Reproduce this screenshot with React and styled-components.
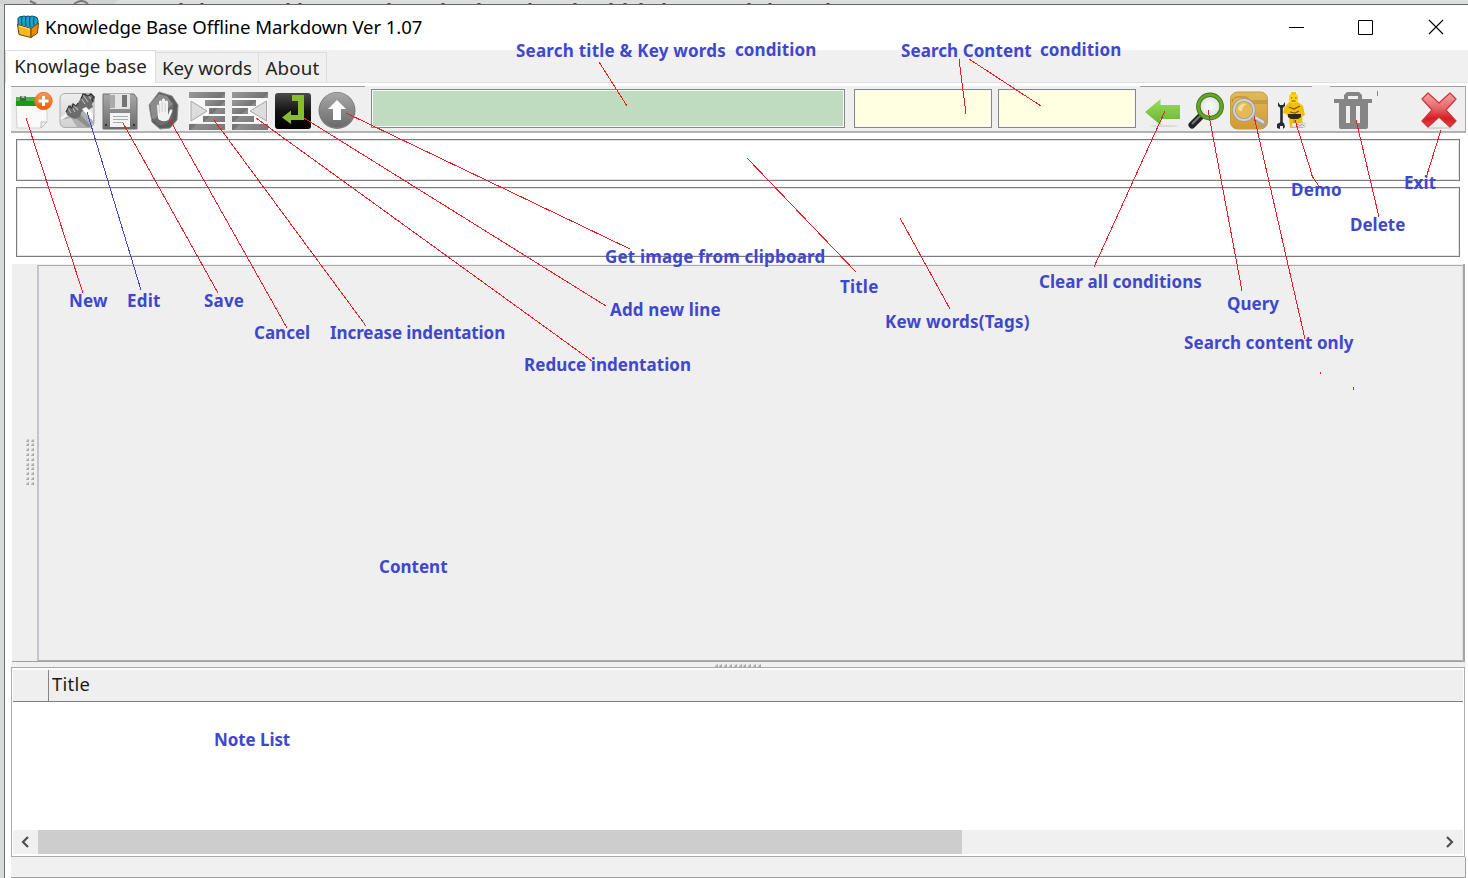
import React from "react";
import styled, { createGlobalStyle } from "styled-components";

const Global = createGlobalStyle`
  * { box-sizing: border-box; }
  html, body { margin: 0; padding: 0; overflow: hidden; }
  body { font-family: "Noto Sans", "Open Sans", "Liberation Sans", sans-serif; color: #1c1c1c; }
  svg { display: block; }
`;

const Desktop = styled.div`
  position: relative;
  width: 1468px;
  height: 878px;
  overflow: hidden;
  display: flex;
  flex-direction: column;
  background: #d9dada;
`;
const Backdrop = styled.div`
  flex: none;
  height: 4px;
  background: #d2d4d4;
`;
const WindowFrame = styled.main`
  flex: 1;
  min-height: 0;
  margin-left: 4px;
  border-left: 1px solid #707070;
  border-top: 1px solid #666;
  background: #fff;
  display: flex;
  flex-direction: column;
`;
const TitleBar = styled.header`
  flex: none;
  height: 45px;
  display: flex;
  align-items: center;
  padding: 0 1px 2px 11px;
`;
const Caption = styled.h1`
  flex: 1;
  margin: 0 0 0 5px;
  font-size: 18.6px;
  font-weight: 400;
  line-height: 26px;
  letter-spacing: ${(p) => p.$track}px;
  color: #000;
  white-space: nowrap;
`;
const WindowButton = styled.button`
  width: 70px;
  height: 40px;
  padding: 0;
  border: 0;
  background: none;
  display: grid;
  place-items: center;
  &:last-child { margin-right: -4px; }
`;
const Tabs = styled.nav`
  flex: none;
  height: 33px;
  display: flex;
  align-items: flex-end;
  background: #f0f0f0;
  border-bottom: 1px solid #e0e0e0;
`;
const Tab = styled.button`
  width: ${(p) => p.$width}px;
  height: ${(p) => (p.$active ? 33 : 30)}px;
  margin: 0 0 ${(p) => (p.$active ? -1 : 0)}px;
  padding: 0 0 ${(p) => (p.$active ? 2 : 0)}px;
  border: 1px solid #dcdcdc;
  border-left-width: ${(p) => (p.$active ? 1 : 0)}px;
  border-bottom: 0;
  background: ${(p) => (p.$active ? "#fff" : "#f0f0f0")};
  font: 400 18.7px/26px "Noto Sans", sans-serif;
  letter-spacing: ${(p) => p.$track}px;
  color: #242424;
  white-space: nowrap;
`;
const Page = styled.section`
  flex: 1;
  min-height: 0;
  padding: 3px 2px 0 6px;
  display: flex;
  flex-direction: column;
`;
const Toolbar = styled.div`
  flex: none;
  height: 47px;
  display: flex;
  align-items: center;
  background: #efefef;
  border-right: 1px solid #a9a9a9;
  border-bottom: 2px solid #b2b2b2;
`;
const ToolGroup = styled.div`
  width: ${(p) => p.$width}px;
  height: 45px;
  padding-left: 1px;
  display: flex;
  align-items: center;
  border-top: 1px solid ${(p) => (p.$plain ? "#efefef" : "#a0a0a0")};
`;
const Tool = styled.button`
  flex: none;
  width: ${(p) => p.$width || 43.3}px;
  height: 42px;
  padding: 1px 0 0;
  border: 0;
  background: none;
  display: grid;
  place-items: center;
`;
const SearchField = styled.input`
  flex: none;
  width: ${(p) => p.$width}px;
  height: 39px;
  margin: -2px 0 0 ${(p) => p.$gap}px;
  padding: 0 6px;
  border: 1px solid #878787;
  outline: 1px solid #f8f8f8;
  outline-offset: -2px;
  background: ${(p) => p.$tone};
`;
const Fields = styled.div`
  flex: none;
  padding: 6px 6px 0 5px;
  height: 131px;
  display: flex;
  flex-direction: column;
  gap: 6px;
`;
const TextField = styled.textarea`
  display: block;
  width: 100%;
  height: ${(p) => p.$height}px;
  margin: 0;
  resize: none;
  border: 1px solid #7c7c7c;
  outline: 1px solid #e4e4e4;
  outline-offset: -2px;
  background: #fff;
`;
const Editor = styled.div`
  flex: none;
  height: 398px;
  margin: 0 1px;
  display: flex;
  background: #efefef;
  border-right: 2px solid #a5a5aa;
  border-bottom: 1px solid #a0a0a0;
`;
const Gutter = styled.div`
  width: 25px;
  display: flex;
  align-items: center;
  justify-content: flex-end;
  padding-right: 1px;
`;
const Content = styled.div`
  flex: 1;
  margin-top: 1px;
  border: 1px solid #ababb2;
  border-left: 2px solid #c4c4cb;
  border-right-color: #dcdcdf;
`;
const Splitter = styled.div`
  flex: none;
  height: 5px;
  background: #f0f0f0;
  display: flex;
  justify-content: center;
  align-items: flex-end;
`;
const GripBox = styled.div`
  display: grid;
  grid-template-columns: repeat(${(p) => p.$cols}, ${(p) => p.$col}px);
  grid-auto-rows: ${(p) => p.$row}px;
`;
const GripDot = styled.i`
  width: 3px;
  height: 3px;
  background: linear-gradient(135deg, #e4e4e4 30%, #a8a8a8 60%);
`;
const NoteTable = styled.section`
  flex: none;
  height: 190px;
  margin-right: 1px;
  border: 1px solid #aaaab0;
  display: flex;
  flex-direction: column;
`;
const TableHead = styled.div`
  height: 34px;
  display: flex;
  margin: 0 1px;
  border-top: 2px solid #fafafa;
  border-bottom: 1px solid #7c7c7c;
  background: #efefef;
`;
const SelectorCell = styled.div`
  width: 36px;
  border-right: 1px solid #858585;
`;
const HeadCell = styled.div`
  padding-left: 3px;
  font-size: 18.4px;
  line-height: 28px;
  letter-spacing: 0.3px;
  color: #1a1a1a;
`;
const Rows = styled.div`
  flex: 1;
  background: #fff;
`;
const ScrollBar = styled.div`
  height: 26px;
  display: flex;
  background: #f0f0f0;
  border-bottom: 2px solid #fff;
  margin: 0 1px;
`;
const ScrollArrow = styled.button`
  width: 25px;
  padding: 0 2px 0 0;
  border: 0;
  background: none;
  display: grid;
  place-items: center;
`;
const Track = styled.div`
  flex: 1;
`;
const Thumb = styled.div`
  width: 924px;
  height: 24px;
  background: #cdcdcd;
`;
const StatusBar = styled.footer`
  flex: 1;
  background: #f0f0f0;
  border-right: 1px solid #a0a0a0;
  border-bottom: 1px solid #a0a0a0;
`;
const Overlay = styled.div`
  position: absolute;
  inset: 0;
  pointer-events: none;
`;
const Note = styled.span`
  position: absolute;
  left: ${(p) => p.$x}px;
  top: ${(p) => p.$y}px;
  font: 700 17px/24px "Noto Sans", sans-serif;
  letter-spacing: ${(p) => p.$track}px;
  color: #3f48cc;
  white-space: nowrap;
`;

const Icon = ({ children, size = 40 }) => (
  <svg width={size} height={size} viewBox="0 0 40 40">{children}</svg>
);

const Gradients = () => (
  <svg width="0" height="0" style={{ position: "absolute" }}>
    <defs>
      <linearGradient id="metal" x1="0" y1="0" x2="0" y2="1"><stop stopColor="#a8a8a8" /><stop offset="1" stopColor="#6a6a6a" /></linearGradient>
      <linearGradient id="bar" x1="0" y1="0" x2="1" y2="1"><stop stopColor="#999" /><stop offset=".5" stopColor="#747474" /><stop offset=".55" stopColor="#8c8c8c" /><stop offset="1" stopColor="#777" /></linearGradient>
      <linearGradient id="leaf" x1="0" y1="0" x2="0" y2="1"><stop stopColor="#9bdc60" /><stop offset="1" stopColor="#68b52d" /></linearGradient>
      <linearGradient id="ruby" x1="0" y1="0" x2="0" y2="1"><stop stopColor="#f3a5a5" /><stop offset=".45" stopColor="#e56566" /><stop offset=".75" stopColor="#d81e24" /><stop offset="1" stopColor="#e04448" /></linearGradient>
      <linearGradient id="gold" x1="0" y1="0" x2="0" y2="1"><stop stopColor="#dfbb59" /><stop offset="1" stopColor="#d09a36" /></linearGradient>
      <linearGradient id="night" x1="0" y1="0" x2="0" y2="1"><stop stopColor="#4a4a4a" /><stop offset=".5" stopColor="#141414" /><stop offset="1" stopColor="#000" /></linearGradient>
      <linearGradient id="orange" x1="0" y1="0" x2="0" y2="1"><stop stopColor="#fb9a4c" /><stop offset="1" stopColor="#ea5a0c" /></linearGradient>
      <linearGradient id="plate" x1="0" y1="0" x2="0" y2="1"><stop stopColor="#eee" /><stop offset="1" stopColor="#d2d2d2" /></linearGradient>
      <radialGradient id="glass"><stop stopColor="#fff" /><stop offset="1" stopColor="#dcdcdc" /></radialGradient>
    </defs>
  </svg>
);

const AppIcon = () => (
  <svg width="24" height="24" viewBox="0 0 24 24">
    <path d="M2 10V3.500q1-2.500 4-2 2-1 4 0 2-1 4 0 2-1 4 0 4 0 4 4v4l-7 5-13-3Z" fill="#12a5d6" stroke="#14475a" />
    <path d="M6 2q-1 3 0 8M10 2q-1 3 0 9M14 2q-1 3 0 10M18 2.500q-1 3 0 8" fill="none" stroke="#123c4c" />
    <path d="m1.500 9.500 13.500 4v9L3 19.500Z" fill="#fdb91b" stroke="#70440a" />
    <path d="m15 13.500 7.500-5.500-1 10-6.500 4.500Z" fill="#e98c0a" stroke="#70440a" />
    <path d="m3 11 11 3.300" stroke="#ffe06a" strokeWidth="1.200" />
  </svg>
);
const NewIcon = () => (
  <Icon>
    <path d="M2 12h31v20l-6 6H3Z" fill="#fafafa" stroke="#d2d2d2" />
    <path d="M2 7h31v9H2Z" fill="#189b1c" /><path d="M2 7h31v4H2Z" fill="#43b445" />
    <rect x="6" y="6" width="6" height="5" rx="1" fill="#3a6b3a" /><path d="M7.500 6h3v2h-3Z" fill="#bbb" />
    <path d="M27 38v-6h6Z" fill="#eee" stroke="#bdbdbd" />
    <circle cx="29.500" cy="11" r="8.700" fill="url(#orange)" stroke="#e8763a" />
    <path d="M29.500 6v10M24.500 11h10" stroke="#fff" strokeWidth="3" />
  </Icon>
);
const EditIcon = () => (
  <Icon>
    <rect x="3" y="3.500" width="34" height="34" rx="5" fill="url(#plate)" stroke="#acacac" />
    <path d="m4 30 6-3 7-2 10-9 10 9v8l-4 4H20l-6-9Z" fill="#b0b0b0" />
    <path d="m15 25 15 12h5L21 22Z" fill="#8f8f8f" />
    <path d="M4 29 33 6" stroke="#f6f6f6" strokeWidth="2.500" />
    <path d="M9 22 12 16l4-2 3 2 2-3 5-9 3-1 2 2 3-2 4 4-1 4-2 3 1 3-5 3-4-1-3 4-1 4-5 2-5-2-3-2Z" fill="#6c6c6c" />
    <path d="m11 18 3 5m0-8 4 7m-2-8 5 6M24 8l4 6m-2-9 5 7m-2-9 5 6" stroke="#b4b4b4" strokeWidth="1.200" />
    <path d="m9 22 3-6 3 2 1-4 3 2 2-3m3-4 2-5 3 1 2 1 3-2 3 3-2 2 1 3" fill="none" stroke="#333" strokeWidth="1.100" />
    <path d="m25 19 11 12v-7l-7-7Z" fill="#fff" />
  </Icon>
);
const SaveIcon = () => (
  <Icon>
    <path d="M4 4h30l3 4v31H3V4Z" fill="url(#metal)" stroke="#707070" />
    <path d="M10 4h20v15H10Z" fill="#e4e4e4" /><path d="M22 5h5v12h-5Z" fill="#747474" />
    <path d="M10 5h5v13h-5Z" fill="#aaa" /><path d="M10 23h20v14H10Z" fill="#f3f3f3" />
    <path d="M13 26.500h15M13 29.500h15M13 32.500h10" stroke="#aaa" />
    <path d="M5 34h2v2H5Zm28 0h2v2h-2Z" fill="#333" />
  </Icon>
);
const StopIcon = () => (
  <Icon>
    <path d="m15 2 13 4 6 9-1 15-7 8-10 1-8-7-3-17Z" fill="#5c5c5c" stroke="#8b8b8b" />
    <path d="m15 4 8 2 6 8-1 14-6 6-7 1-7-7-2-14Z" fill="#8c8c8c" />
    <path d="m9 30 20-16-1 14-6 6-7 1Z" fill="#6c6c6c" />
    <path d="M13 16c0-2 2-2 2 0v6V12c0-2 3-2 3 0v8V10c0-2 3-2 3 0v10-8c0-2 3-2 3 0v13l2-5c2-1 3 0 2 2l-3 7c-1 3-10 3-11-1Z" fill="#f2f2f2" />
    <path d="M15.200 14v9M18.200 12v10M21.200 13v9" stroke="#b5b5b5" strokeWidth=".6" />
  </Icon>
);
const IndentIcon = ({ reverse }) => (
  <Icon>
    <path d="M2 8h36v25H2Z" fill="#f8f8f8" />
    <path d="M2 2h36v6H2Zm0 32h36v6H2Z" fill="url(#bar)" />
    {reverse ? (
      <><path d="M2 10h24v6H2ZM2 18h16v6H2Zm0 8h22v6H2Z" fill="url(#bar)" /><path d="M36.500 11v20L20 21Z" fill="#ddd" stroke="#a7a7a7" /></>
    ) : (
      <><path d="M18 10h20v6H18Zm4 8h16v6H22Zm-6 8h22v6H16Z" fill="url(#bar)" /><path d="M4 11v20l16-10Z" fill="#ddd" stroke="#a7a7a7" /></>
    )}
  </Icon>
);
const ReturnIcon = () => (
  <Icon>
    <rect x="2" y="3" width="36" height="36" rx="3" fill="url(#night)" />
    <path d="M19 5h12v25H18v4L9 27.500l9-7V25h7V11h-6Z" fill="#86bd2e" />
  </Icon>
);
const UpIcon = () => (
  <Icon>
    <circle cx="20" cy="20.500" r="18.500" fill="#7d7d7d" /><circle cx="20" cy="20" r="17.300" fill="url(#metal)" />
    <path d="m20 10 9 9h-5v11h-8V19h-5Z" fill="#fff" />
  </Icon>
);
const ClearIcon = () => (
  <Icon>
    <ellipse cx="21" cy="36" rx="14" ry="1" fill="#d8d8d8" />
    <path d="M2 22 17.500 9v6H37v14H17.500v6Z" fill="url(#leaf)" />
  </Icon>
);
const QueryIcon = () => (
  <Icon>
    <path d="m6 35 9-9" stroke="#242424" strokeWidth="7" strokeLinecap="round" /><path d="m6 34 9-9" stroke="#777" strokeWidth="2" />
    <circle cx="24" cy="16.500" r="11.700" fill="url(#glass)" stroke="#427a17" strokeWidth="4.500" />
    <circle cx="24" cy="16.500" r="11.700" fill="none" stroke="#69a42b" strokeWidth="2.500" />
  </Icon>
);
const FolderIcon = () => (
  <Icon>
    <rect x="1.500" y="2" width="37" height="37" rx="7" fill="url(#gold)" stroke="#c89b43" />
    <path d="M3 12q1-6 8-5h6l5 4h16M3 17q8-4 15-4h20" fill="none" stroke="#b38431" />
    <path d="m24 27 10 6" stroke="#a2a2a2" strokeWidth="6" strokeLinecap="round" /><path d="m24 26 10 6" stroke="#ddd" strokeWidth="2.500" strokeLinecap="round" />
    <circle cx="15" cy="20" r="10" fill="#e7b951" stroke="#999d9f" strokeWidth="3.500" /><circle cx="15" cy="20" r="10" fill="none" stroke="#d1d4d5" strokeWidth="1.800" />
    <path d="M9 18q3-6 9-4-5 2-5 7-3 1-4-3Z" fill="#f2dda8" />
  </Icon>
);
const DemoIcon = () => (
  <Icon>
    <path d="M17 12h9l5 4 2 9-3 2 1 11H18l-1-10-3-4-3-1 1-5Z" fill="#f1c100" />
    <rect x="17" y="4" width="9" height="9" rx="3" fill="#fbd418" /><rect x="19" y="2" width="5" height="3" rx="1" fill="#f3c503" />
    <path d="M19 8h1.500m2.500 0h1.500m-5 3h4M17 17l5 2 6-3m-10 6 5 1 4-2" fill="none" stroke="#7c5510" strokeWidth="1.200" />
    <path d="M16 24h13v3l-3 2h-7l-3-2Z" fill="#312a17" />
    <path d="M9.500 15v19" stroke="#272b34" strokeWidth="2.600" /><path d="M6 12v4l3.500 3 3.500-3v-4l-2 3H8ZM9 32l-4 2v4l3 1v-3h3v3l2-2-1-4Z" fill="#272b34" />
    <path d="M22 29v8" stroke="#af8208" />
    <path d="M20 33h13v4H20Z" fill="#eee" stroke="#aaa" strokeWidth=".5" /><path d="m24 36 2-2 2 2 2-2 2 2" fill="none" stroke="#999" />
  </Icon>
);
const TrashIcon = () => (
  <Icon>
    <path fillRule="evenodd" d="M11 9V5l3-3h12l3 3v4h10v4h-4v24q0 2-2 2H8q-2 0-2-2V13H1V9Zm4 0h10V6H15Zm-2 7v17h4V16Zm10 0v17h4V16Z" fill="#858585" />
  </Icon>
);
const ExitIcon = () => (
  <Icon>
    <ellipse cx="20" cy="38" rx="13" ry="1" fill="#d5d5d5" />
    <path d="m3 9 6-6 11 10L31 3l6 6-10 11 10 11-6 6-11-10L9 37l-6-6 10-11Z" fill="url(#ruby)" stroke="#cb3539" strokeWidth="1.200" strokeLinejoin="round" />
  </Icon>
);

const leftTools = [
  ["New", <NewIcon />], ["Edit", <EditIcon />], ["Save", <SaveIcon />], ["Cancel", <StopIcon />],
  ["Increase indentation", <IndentIcon />], ["Reduce indentation", <IndentIcon reverse />],
  ["Add new line", <ReturnIcon />], ["Get image", <UpIcon />],
];
const rightTools = [
  ["Clear", <ClearIcon />, 43], ["Query", <QueryIcon />, 43], ["Search content", <FolderIcon />, 43],
  ["Demo", <DemoIcon />, 43], ["Delete", <TrashIcon />, 79], ["Exit", <ExitIcon />, 94],
];

const notes = [
  ["Search title & Key words", 516, 39, 0.22], ["condition", 735, 38, 0.1],
  ["Search Content", 901, 39, 0.07], ["condition", 1040, 38, 0.1],
  ["New", 69, 289, 0.2], ["Edit", 127, 289, 0.2], ["Save", 204, 289, 0.2],
  ["Cancel", 254, 321, 0], ["Increase indentation", 330, 321, -0.09],
  ["Reduce indentation", 524, 353, 0.05], ["Add new line", 610, 298, 0.17],
  ["Get image from clipboard", 605, 245, 0.18], ["Title", 840, 275, 0.2],
  ["Kew words(Tags)", 885, 310, 0.23], ["Clear all conditions", 1039, 270, 0.04],
  ["Query", 1227, 292, 0], ["Search content only", 1184, 331, 0.06],
  ["Demo", 1291, 178, 0.3], ["Delete", 1350, 213, 0], ["Exit", 1404, 171, 0.1],
  ["Content", 379, 555, 0], ["Note List", 214, 728, -0.08],
];
const pointers = [
  "M26 118 83 293", "M123 123 218 293", "M170 120 287 328", "M214 120 366 326",
  "M256 118 592 361", "M304 118 606 306", "M346 113 630 249", "M599 62 627 106",
  "M959 59 966 114", "M969 59 1041 106", "M747 158 856 272", "M900 218 950 309",
  "M1165 111 1094 267", "M1208 110 1242 291", "M1254 116 1305 339",
  "M1295 120 1313 178M1311 174l9 14", "M1356 120 1379 217", "M1441 130 1426 178",
];

const Grip = ({ cols, rows, row, col = 5 }) => (
  <GripBox $cols={cols} $row={row} $col={col}>
    {Array.from({ length: cols * rows }, (_, i) => <GripDot key={i} />)}
  </GripBox>
);

export default function App() {
  return (
    <Desktop>
      <Global />
      <Gradients />
      <Backdrop>
        <svg width="1468" height="4">
          <path d="M118 0H1468V4H114Z" fill="#dddfdf" />
          <path d="M74 4q8-6 14 0M30 1l6 3" fill="none" stroke="#777" strokeWidth="2" />
          <path d="M181 3v1m21-1v1m86-1v1m12-1v1m89-1v1m54-1v1m36-1v1m51-1v1m45-1v1m36-1v1m14-1v1m16-1v1m23-1v1m85-1v1m21-1v1m58-1v1" stroke="#4b4b4b" strokeWidth="3" />
        </svg>
      </Backdrop>
      <WindowFrame>
        <TitleBar>
          <AppIcon />
          <Caption $track={-0.1}>Knowledge Base Offline Markdown Ver 1.07</Caption>
          <WindowButton aria-label="Minimize"><svg width="16" height="16"><path d="M1 8.500h15" stroke="#000" /></svg></WindowButton>
          <WindowButton aria-label="Maximize"><svg width="16" height="16"><path d="M.5 1.500h14v14h-14Z" fill="none" stroke="#000" /></svg></WindowButton>
          <WindowButton aria-label="Close"><svg width="16" height="16"><path d="m1 1 14 14M15 1 1 15" stroke="#000" strokeWidth="1.100" /></svg></WindowButton>
        </TitleBar>
        <Tabs>
          <Tab $active $width={151} $track={0}>Knowlage base</Tab>
          <Tab $width={103} $track={0}>Key words</Tab>
          <Tab $width={68} $track={0.2}>About</Tab>
        </Tabs>
        <Page>
          <Toolbar>
            <ToolGroup $width={354}>
              {leftTools.map(([name, icon]) => <Tool key={name} aria-label={name}>{icon}</Tool>)}
            </ToolGroup>
            <ToolGroup $width={775} $plain>
              <SearchField $width={474} $gap={5} $tone="#c0dcc0" />
              <SearchField $width={138} $gap={9} $tone="#ffffe1" />
              <SearchField $width={138} $gap={6} $tone="#ffffe1" />
            </ToolGroup>
            <ToolGroup $width={325}>
              {rightTools.map(([name, icon, width]) => <Tool key={name} $width={width} aria-label={name}>{icon}</Tool>)}
            </ToolGroup>
          </Toolbar>
          <Fields>
            <TextField $height={42} />
            <TextField $height={70} />
          </Fields>
          <Editor>
            <Gutter><Grip cols={2} rows={10} row={4.8} /></Gutter>
            <Content />
          </Editor>
          <Splitter><Grip cols={10} rows={1} row={3} col={4.8} /></Splitter>
          <NoteTable>
            <TableHead><SelectorCell /><HeadCell>Title</HeadCell></TableHead>
            <Rows />
            <ScrollBar>
              <ScrollArrow aria-label="Scroll left"><svg width="12" height="14"><path d="M9 2 4 7l5 5" fill="none" stroke="#505050" strokeWidth="2.200" /></svg></ScrollArrow>
              <Track><Thumb /></Track>
              <ScrollArrow aria-label="Scroll right"><svg width="12" height="14"><path d="m3 2 5 5-5 5" fill="none" stroke="#505050" strokeWidth="2.200" /></svg></ScrollArrow>
            </ScrollBar>
          </NoteTable>
          <StatusBar />
        </Page>
      </WindowFrame>
      <Overlay>
        {notes.map(([text, x, y, track]) => <Note key={text + x} $x={x} $y={y} $track={track}>{text}</Note>)}
        <svg width="1468" height="878" fill="none" strokeWidth="1" shapeRendering="crispEdges">
          {pointers.map((d) => <path key={d} d={d} stroke="#ed1c24" />)}
          <path d="M87 112 141 290" stroke="#3f48cc" />
          <path d="M1320 372v2" stroke="#ed1c24" /><path d="M1353.500 387v3" stroke="#3f48cc" />
          <path d="M1377.500 91v5" stroke="#888" />
          <path d="M1312 86.500h18" stroke="#efefef" strokeWidth="3" />
        </svg>
      </Overlay>
    </Desktop>
  );
}
